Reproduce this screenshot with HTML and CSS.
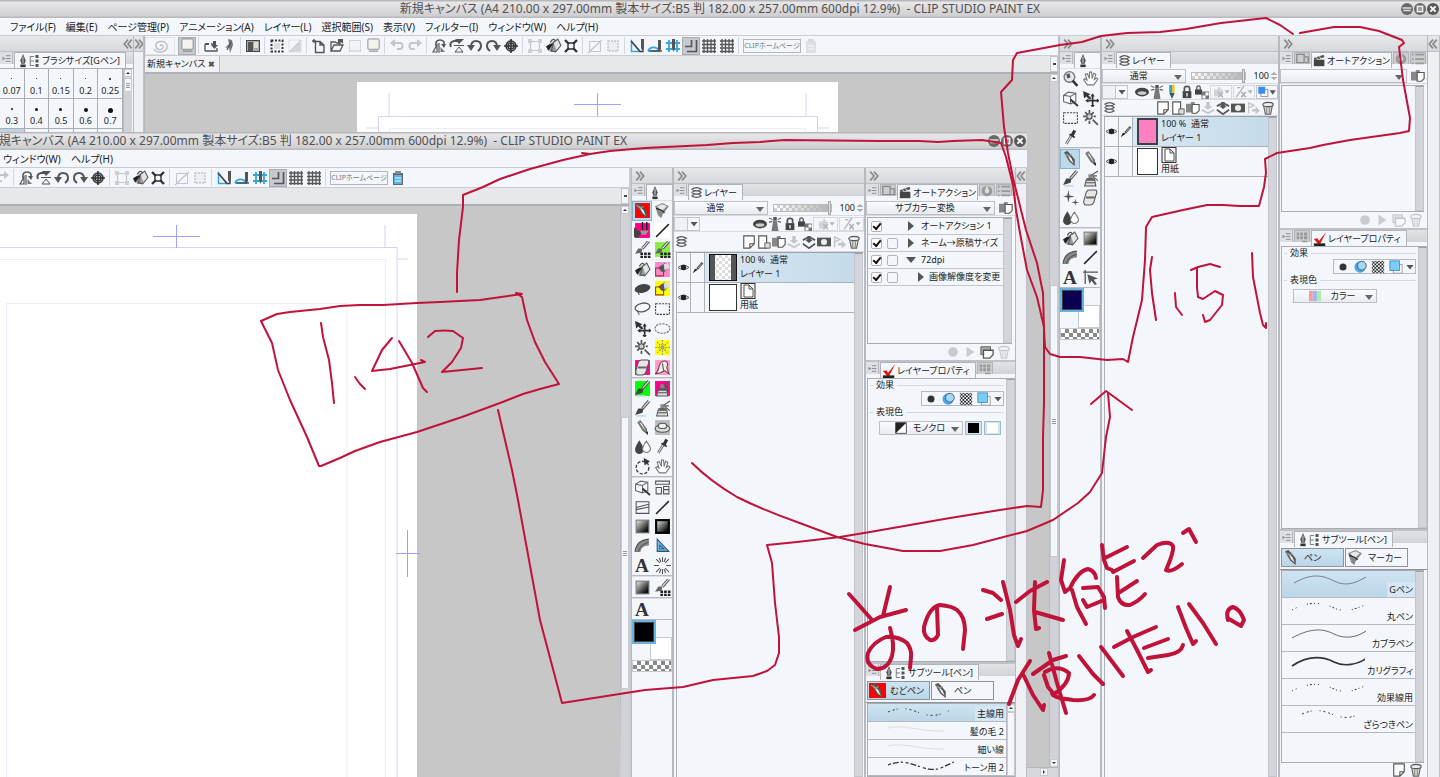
FILE: index.html
```html
<!DOCTYPE html>
<html lang="ja">
<head>
<meta charset="utf-8">
<title>CLIP STUDIO PAINT EX</title>
<link rel="stylesheet" href="styles.css">
</head>
<body>
<main class="desktop">

<section class="win win-back">
  <header class="title">
    <span>新規キャンバス (A4 210.00 x 297.00mm 製本サイズ:B5 判 182.00 x 257.00mm 600dpi 12.9%)&nbsp; - CLIP STUDIO PAINT EX</span>
    <div class="winbtns"><button data-i="wmin" aria-label="最小化"></button><button data-i="wmax" aria-label="最大化"></button><button data-i="wclose" aria-label="閉じる"></button></div>
  </header>
  <nav class="menu">
    <button>ファイル(F)</button><button>編集(E)</button><button>ページ管理(P)</button><button>アニメーション(A)</button><button>レイヤー(L)</button><button>選択範囲(S)</button><button>表示(V)</button><button>フィルター(I)</button><button>ウィンドウ(W)</button><button>ヘルプ(H)</button>
  </nav>
  <div class="body">
    <aside class="dock brush">
      <div class="dockhead end"><i data-i="cl"></i></div>
      <div class="tabs"><span class="tabmenu" data-i="tabmenu"></span><span class="tab on"><i data-i="nib"></i><i data-i="tree"></i>ブラシサイズ[Gペン]</span></div>
      <div class="sizes">
        <div class="sizegrid">
          <button><b class="d1"></b>0.07</button><button><b class="d1"></b>0.1</button><button><b class="d1"></b>0.15</button><button><b class="d1"></b>0.2</button><button><b class="d2"></b>0.25</button>
          <button><b class="d2"></b>0.3</button><button><b class="d3"></b>0.4</button><button><b class="d3"></b>0.5</button><button><b class="d4"></b>0.6</button><button><b class="d5"></b>0.7</button>
          <button class="sel"></button><button></button><button></button><button></button><button></button>
        </div>
        <div class="vscroll small"><span class="arr up"></span><span class="thumb grip"></span></div>
      </div>
    </aside>
    <div class="strip"><div class="dockhead"><i data-i="cr"></i></div></div>
    <div class="work">
      <div class="toolbar" data-toolbar="full"></div>
      <div class="doctabs"><button class="doctab">新規キャンバス <b>✖</b></button><span class="dropend"></span></div>
      <div class="view">
        <svg class="paper paper-back" viewBox="0 0 481 56" preserveAspectRatio="xMidYMin slice" aria-hidden="true">
          <path class="p3" d="M32.500 46.500H449M32.500 46.500V56M449 46.500V56"/>
          <path class="p2" d="M21.500 34.500H460.500M21.500 34.500V56M460.500 34.500V56M32 11V34M449 11V34M9 46H21M461 46H472"/>
          <path class="p1" d="M217 22.500H264M240.500 11V34"/>
        </svg>
        <div class="vscroll"><span class="arr up"></span><span class="thumb grip thumb-back"></span><span class="arr down"></span></div>
      </div>
      <div class="hscroll"><span class="arr right"></span></div>
    </div>
    <aside class="dock tools">
      <div class="dockhead"><i data-i="cr"></i></div>
      <div class="tabs"><span class="tabmenu" data-i="tabmenu"></span><span class="tab on"><i data-i="nib"></i></span></div>
      <div data-tools="zoom hand cube move marquee wand dropper"></div>
      <div data-tools="*pen pencil brush airbrush sparkle eraser drops"></div>
      <div data-tools="bucket grad fan line letter node"></div>
      <div class="colors"><button class="fg navy" aria-label="メインカラー"></button><button class="bg" aria-label="サブカラー"></button></div>
      <div class="checker"></div>
    </aside>
    <aside class="dock layers">
      <div class="dockhead"><i data-i="cr"></i></div>
      <div class="tabs"><span class="tabmenu" data-i="tabmenu"></span><span class="tab on"><i data-i="stack"></i>レイヤー</span></div>
      <div class="lrow"><label class="combo grow"><select aria-label="合成モード"><option>通常</option></select></label><input class="opacity" type="range" value="100" aria-label="不透明度"><span class="num">100</span><i data-i="spin"></i></div>
      <div class="lrow"><button class="swbtn" aria-label="パレットカラー"><span></span><i data-i="tri"></i></button><span class="push"></span><i data-i="mask"></i><i data-i="tower"></i><i data-i="draft"></i><i data-i="lock"></i><i data-i="locka"></i><button class="dim" data-i="stardd" aria-label="マスク"></button><button class="dim" data-i="slashdd" aria-label="定規"></button><button class="lcol" data-i="bluedd" aria-label="レイヤーカラー"></button></div>
      <div class="lrow acts"><i data-i="stack"></i><span class="push"></span><i data-i="page"></i><i data-i="page2"></i><i data-i="folder"></i><i class="faint" data-i="down"></i><i data-i="merge"></i><i data-i="maskb"></i><i class="faint" data-i="send"></i><i data-i="trash"></i></div>
      <div class="listwrap">
        <ul class="layerlist">
          <li class="sel"><span class="eye" data-i="eye"></span><span class="edit" data-i="mini"></span><span class="thumbnail pink"></span><p>100 % &nbsp;通常<br>レイヤー 1</p></li>
          <li><span class="eye" data-i="eye"></span><span class="edit"></span><span class="thumbnail"></span><p><span class="pg" data-i="sheet"></span>用紙</p></li>
        </ul>
        <div class="gutter"></div>
      </div>
    </aside>
    <aside class="dock side">
      <div class="dockhead"><i data-i="cr"></i></div>
      <div class="tabs"><span class="tabmenu" data-i="tabmenu"></span><span class="tab" data-i="screens"></span><span class="tab on cut"><i data-i="clap"></i>オートアクション</span><span class="tab" data-i="info"></span><span class="tab" data-i="lines"></span></div>
      <div class="lrow"><label class="combo grow"><select aria-label="アクションセット"><option></option></select></label><i data-i="folder"></i></div>
      <div class="box actions"><div class="fill"></div><div class="gutter"></div></div>
      <div class="boxfoot faint"><i data-i="rec"></i><i data-i="play"></i><i data-i="copy"></i><i data-i="trash"></i></div>
      <div class="tabs cutline"><span class="tabmenu" data-i="tabmenu"></span><span class="tab" data-i="cells"></span><span class="tab on"><i data-i="check"></i>レイヤープロパティ</span></div>
      <div class="box props">
        <div class="fill">
          <h3>効果</h3>
          <div class="effects"><i data-i="dot"></i><i data-i="blob"></i><i data-i="tone"></i><i data-i="bluesq"></i><i data-i="tri"></i></div>
          <h3>表現色</h3>
          <div class="express"><label class="combo mid"><i data-i="rgb"></i><select aria-label="表現色"><option>カラー</option></select></label></div>
        </div>
        <div class="gutter"></div>
      </div>
      <div class="tabs cutline"><span class="tabmenu" data-i="tabmenu"></span><span class="tab on"><i data-i="nib"></i><i data-i="tree"></i>サブツール[ペン]</span></div>
      <div class="subs"><button class="sel"><i data-i="pen"></i>ペン</button><button><i data-i="marker"></i>マーカー</button></div>
      <div class="box sublist tall">
        <ul class="fill">
          <li class="sel"><i data-s="thin"></i><span>Gペン</span></li>
          <li><i data-s="dots"></i><span>丸ペン</span></li>
          <li><i data-s="mid"></i><span>カブラペン</span></li>
          <li><i data-s="bold"></i><span>カリグラフィ</span></li>
          <li><i data-s="dots"></i><span>効果線用</span></li>
          <li><i data-s="dots2"></i><span>ざらつきペン</span></li>
        </ul>
        <div class="gutter"></div>
      </div>
      <div class="boxfoot"><i data-i="page"></i><i data-i="trash"></i></div>
    </aside>
    <div class="strip"><div class="dockhead"><i data-i="cl"></i></div></div>
  </div>
</section>

<section class="win win-front">
  <header class="title">
    <span>新規キャンバス (A4 210.00 x 297.00mm 製本サイズ:B5 判 182.00 x 257.00mm 600dpi 12.9%)&nbsp; - CLIP STUDIO PAINT EX</span>
    <div class="winbtns"><button data-i="wmin" aria-label="最小化"></button><button data-i="wmax" aria-label="最大化"></button><button data-i="wclose" aria-label="閉じる"></button></div>
  </header>
  <nav class="menu"><button>ウィンドウ(W)</button><button>ヘルプ(H)</button></nav>
  <div class="body">
    <div class="work">
      <div class="toolbar" data-toolbar="tail"></div>
      <div class="doctabs"><span class="dropend"></span></div>
      <div class="view">
        <svg class="paper paper-front" viewBox="0 0 421 571" preserveAspectRatio="xMinYMin slice" aria-hidden="true">
          <rect width="417" height="571" fill="#fff"/>
          <path class="p3" d="M0 45.500H385.500V571M6.500 571V89.500H347V571"/>
          <path class="p2" d="M0 33.500H397M385 11V34M397 45H408"/>
          <path class="p2" d="M397 33V571"/>
          <path class="p1" d="M153 22.500H200M176.500 11V34M396 339.500H420M407.500 316V363"/>
        </svg>
        <div class="vscroll"><span class="arr up"></span><span class="thumb grip thumb-front"></span></div>
      </div>
    </div>
    <aside class="dock tools">
      <div class="dockhead"><i data-i="cr"></i></div>
      <div class="tabs"><span class="tabmenu" data-i="tabmenu"></span><span class="tab on"><i data-i="nib"></i></span></div>
      <div data-tools="*pen@f00 marker stamp@f08 line@fff deco deco@8e4 bucket bucket2@f8c ink bucket2@ff0 lasso marquee move ellipse wand burst@ff0 eraser@f08 smudge@f9c"></div>
      <div data-tools="brush@0f0 airbrush@f08 brush airbrush pencil ufo@bbb drops dropper rotate hand"></div>
      <div data-tools="cube panels split line grad grad2 fan ruler letter rays"></div>
      <div data-tools="grad deco"></div>
      <div data-tools="letter"></div>
      <div class="colors"><button class="fg" aria-label="メインカラー"></button><button class="bg" aria-label="サブカラー"></button></div>
      <div class="checker"></div>
    </aside>
    <aside class="dock layers">
      <div class="dockhead"><i data-i="cr"></i></div>
      <div class="tabs"><span class="tabmenu" data-i="tabmenu"></span><span class="tab on"><i data-i="stack"></i>レイヤー</span></div>
      <div class="lrow"><label class="combo grow"><select aria-label="合成モード"><option>通常</option></select></label><input class="opacity" type="range" value="100" aria-label="不透明度"><span class="num">100</span><i data-i="spin"></i></div>
      <div class="lrow"><button class="swbtn" aria-label="パレットカラー"><span></span><i data-i="tri"></i></button><span class="push"></span><i data-i="mask"></i><i data-i="tower"></i><i data-i="lock"></i><i data-i="locka"></i><button class="dim" data-i="stardd" aria-label="マスク"></button><button class="dim" data-i="slashdd" aria-label="定規"></button></div>
      <div class="lrow acts"><i data-i="stack"></i><span class="push"></span><i data-i="page"></i><i data-i="page2"></i><i data-i="folder"></i><i class="faint" data-i="down"></i><i data-i="merge"></i><i data-i="maskb"></i><i class="faint" data-i="send"></i><i data-i="trash"></i></div>
      <div class="listwrap">
        <ul class="layerlist wide">
          <li class="sel"><span class="eye" data-i="eye"></span><span class="edit" data-i="mini"></span><span class="thumbnail clear"></span><p>100 % &nbsp;通常<br>レイヤー 1</p></li>
          <li><span class="eye" data-i="eye"></span><span class="edit"></span><span class="thumbnail"></span><p><span class="pg" data-i="sheet"></span>用紙</p></li>
        </ul>
        <div class="gutter"></div>
      </div>
    </aside>
    <aside class="dock side">
      <div class="dockhead"><i data-i="cr"></i></div>
      <div class="tabs"><span class="tabmenu" data-i="tabmenu"></span><span class="tab" data-i="screens"></span><span class="tab on cut"><i data-i="clap"></i>オートアクション</span><span class="tab" data-i="info"></span><span class="tab" data-i="lines"></span></div>
      <div class="lrow"><label class="combo grow"><select aria-label="アクションセット"><option>サブカラー変換</option></select></label><i data-i="folder"></i></div>
      <div class="box actions">
        <ul class="fill actlist">
          <li><label><input type="checkbox" checked><input class="ghost" type="checkbox" aria-label="設定"><b class="tr"></b>オートアクション 1</label></li>
          <li><label><input type="checkbox" checked><input type="checkbox" aria-label="設定"><b class="tr"></b>ネーム→原稿サイズ</label></li>
          <li><label><input type="checkbox" checked><input type="checkbox" aria-label="設定"><b class="td"></b>72dpi</label></li>
          <li class="child"><label><input type="checkbox" checked><input type="checkbox" aria-label="設定"><b class="tr"></b>画像解像度を変更</label></li>
        </ul>
        <div class="gutter"></div>
      </div>
      <div class="boxfoot"><i class="faint" data-i="rec"></i><i class="faint" data-i="play"></i><i data-i="copy"></i><i class="faint" data-i="trash"></i></div>
      <div class="tabs cutline"><span class="tabmenu" data-i="tabmenu"></span><span class="tab on"><i data-i="check"></i>レイヤープロパティ</span><span class="tab" data-i="cells"></span></div>
      <div class="box props">
        <div class="fill">
          <h3>効果</h3>
          <div class="effects"><i data-i="dot"></i><i data-i="blob"></i><i data-i="tone"></i><i data-i="bluesq"></i><i data-i="tri"></i></div>
          <h3>表現色</h3>
          <div class="express"><label class="combo mid"><i data-i="bw"></i><select aria-label="表現色"><option>モノクロ</option></select></label><button class="sw black" aria-label="黒"></button><button class="sw" aria-label="白"></button></div>
        </div>
        <div class="gutter"></div>
      </div>
      <div class="tabs cutline"><span class="tabmenu" data-i="tabmenu"></span><span class="tab on"><i data-i="nib"></i><i data-i="tree"></i>サブツール[ペン]</span></div>
      <div class="subs"><button class="sel"><i class="redbg" data-i="pen"></i>むどペン</button><button><i data-i="pen"></i>ペン</button></div>
      <div class="box sublist">
        <ul class="fill">
          <li class="sel"><i data-s="dots2"></i><span>主線用</span></li>
          <li><i data-s="pale"></i><span>髪の毛 2</span></li>
          <li><i data-s="pale"></i><span>細い線</span></li>
          <li><i data-s="dash"></i><span>トーン用 2</span></li>
          <li></li>
        </ul>
        <div class="vscroll small"><span class="arr up"></span><span class="thumb"></span></div>
      </div>
    </aside>
    <div class="strip"><div class="dockhead"><i data-i="cl"></i></div></div>
  </div>
</section>

<svg class="notes" viewBox="0 0 1440 777" preserveAspectRatio="none" role="img" aria-label="手書きメモ">
  <g class="fine">
    <path d="M319 466L307 437L290 400L278 370L272 343L261 321L277 314L290 312L320 309L340 306L360 305L383 305L417 303L440 302L480 300L522 294L516 293L522 297L527 320L535 342L545 362L559 384L540 389L523 394L500 403L462 417L417 432L380 442L355 451L340 458L321 466Z"/>
    <path d="M321 323L323 337L329 360L332 383L334 403M355 377L360 384L365 389M392 338L382 350L372 371L390 369L425 362L421 360M399 341L412 363L423 388L427 392M428 337L435 331Q445 330 453 331L463 338L461 348L452 362L442 372L482 368"/>
    <path d="M457 292L457 273L459 240L463 207V195L473 191L483 187L500 179L530 169L563 160L590 154L582 153L590 154L610 151L645 148L707 145L733 143L760 142L785 140L880 141L919 141L938 142L953 141L982 140L1001 143L1006 157L1013 185L1016 210L1020 233L1027 270L1037 297L1044 327V403L1043 437V490L1041 507L1027 506L1000 510L950 518L870 532L840 537L797 542L767 545L772 563L775 603L779 637V653L775 665L767 671L753 676L713 680L683 687L645 690L562 703L540 620L518 500L512 470L498 410"/>
    <path d="M1293 34L1280 25L1266 18L1221 23L1186 29L1160 32L1127 33L1101 36L1082 42L1060 45L1017 53L1013 60L1012 80L1001 92L1004 127L1008 153L1013 178L1026 230L1037 263L1043 293L1044 330L1045 347L1050 354L1060 357H1080L1107 360L1123 359L1128 362L1133 337L1142 300L1145 260L1146 227L1152 217L1183 210L1207 205H1223L1240 206L1259 206L1264 187L1266 173L1265 159L1277 153L1310 148L1323 145L1350 140L1400 133L1409 131L1410 118L1403 80L1399 47L1404 43L1402 40L1379 31L1360 27H1334L1300 33"/>
    <path d="M692 463Q710 481 737 497Q763 510 797 522L837 537L865 544L903 551H940L973 545L1027 531L1053 520L1078 503L1090 492L1102 473L1106 437L1110 417L1108 393M1091 404L1106 391L1132 410"/>
    <path d="M1152 257L1150 270L1152 293L1156 320M1175 293L1176 307L1182 315M1191 270L1198 267L1210 264L1220 267M1197 268V287L1198 297L1203 299L1215 291L1223 295L1222 305L1210 320L1205 322L1203 315M1252 253L1253 277L1260 313L1263 325L1266 328V323"/>
  </g>
  <g class="thick">
    <path d="M849 594L858 604L872 620M890 587L883 616M855 630L880 617L906 610M890 628Q895 645 892 656Q888 669 877 669Q865 665 868 653Q873 642 886 637Q899 636 907 643Q912 650 911 657L910 668"/>
    <path d="M937 608L938 635Q935 641 930 640Q923 636 924 627Q929 607 940 605Q952 606 957 610Q965 617 965 630L963 649"/>
    <path d="M983 590L993 593L1001 600M987 619L1002 614M1003 582L1010 610L1014 635L1018 646L1021 639M1016 602L1030 591L1047 582M1035 582L1034 610L1036 629L1039 628M1035 612L1063 620"/>
    <path d="M1064 560L1061 580L1065 592L1070 588Q1078 571 1088 569Q1095 571 1096 578M1072 590L1077 607L1086 624M1083 588L1098 587L1104 597L1105 608M1083 600L1087 607L1104 600M1102 545L1104 560L1107 568L1112 570M1127 547L1105 558M1134 561L1113 572M1117 577L1118 597Q1121 606 1130 605Q1139 601 1145 594M1137 581L1120 592"/>
    <path d="M1143 558L1157 545Q1169 540 1173 546Q1174 552 1166 570Q1171 573 1182 564M1183 533L1189 529L1196 542"/>
    <path d="M1030 661L1018 680L1009 704M1023 674L1033 695L1043 710L1044 705M1033 674L1053 660L1066 656M1044 675L1048 687L1053 693M1045 672Q1058 664 1069 673Q1069 684 1053 695M1049 653L1057 683L1066 713M1052 693Q1052 698 1073 700Q1090 701 1094 695"/>
    <path d="M1079 656L1093 674L1103 684M1101 647L1123 676M1114 647L1133 637L1156 627M1127 631L1137 650L1148 672L1151 670M1144 648L1168 639M1148 658L1168 655Q1181 653 1183 645"/>
    <path d="M1178 607L1186 628L1193 644L1196 641M1189 604L1203 623L1216 644M1228 620Q1225 609 1233 607Q1240 609 1244 620L1241 626L1229 619"/>
  </g>
</svg>
</main>
<script src="ui.js"></script>
</body>
</html>
```

FILE: styles.css
```css
* { box-sizing: border-box; }
body {
  margin: 0;
  font: 10px/14px "Noto Sans", "Noto Sans CJK JP", sans-serif;
  font-feature-settings: "palt";
  color: #222;
}
button, select, input { font: inherit; font-feature-settings: inherit; color: inherit; margin: 0; padding: 0; border: 0; background: none; }
ul, p, h3 { margin: 0; padding: 0; list-style: none; font-weight: normal; font-size: inherit; }
svg { display: block; }
[data-i] { display: inline-flex; align-items: center; justify-content: center; flex: none; font-style: normal; }

.desktop { position: relative; min-height: 100vh; overflow: hidden; background: #c7c7c7; }
.win { position: absolute; display: flex; flex-direction: column; overflow: hidden; background: #f3f7fc; }
.win-back { inset: 0; }
.win-front { left: 0; right: 413px; top: 132px; bottom: 0; }
.win > .body { flex: 1; display: grid; min-height: 0; }
.win-back > .body { grid-template-columns: 134px 10px minmax(0, 1fr) 42px 178px 149px 12px; }
.win-front > .body { grid-template-columns: minmax(0, 1fr) 42px 192px 151px 11px; }

.title { flex: none; height: 18px; position: relative; display: flex; justify-content: center; align-items: center; white-space: nowrap; font-size: 12px; color: #505050; background: linear-gradient(#b8b8ba 0 1px, #e8e8ea 2px, #cfcfd2 16px, #b9babd 17px); }
.win-front .title { justify-content: flex-end; padding-right: 400px; }
.winbtns { position: absolute; right: 1px; top: 3px; display: flex; gap: 1px; }
.menu { flex: none; height: 18px; display: flex; gap: 10px; padding-left: 10px; border-bottom: 1px solid #c9ccd2; white-space: nowrap; }
.win-front .menu { padding-left: 3px; }

.work { display: flex; flex-direction: column; min-width: 0; overflow: hidden; border-left: 1px solid #b4b7bd; border-right: 1px solid #c2c5cb; }
.win-front .work { border-left: 0; border-right: 2px solid #c9ccd2; }
.toolbar { flex: none; height: 20px; display: flex; align-items: center; border-bottom: 1px solid #c9ccd2; }
.toolbar button { flex: none; width: 18px; height: 18px; }
.toolbar .spiral { width: 30px; margin-right: 3px; border: 1px solid #dfe2e7; }
.toolbar .on { background: #c6c9cf; border: 1px solid #a9acb3; }
.toolbar .off, .faint { opacity: .3; }
.toolbar hr { flex: none; width: 1px; height: 17px; margin: 0 3px 0 2px; border: 0; background: #d3d7dd; }
.toolbar .clip { width: 58px; height: 14px; margin: 0 1px 0 1px; border: 1px solid #b3b6bc; color: #777; font-size: 7px; line-height: 12px; white-space: nowrap; }
.win-front .toolbar button:first-child { margin-left: -7px; }
.doctabs { flex: none; height: 18px; display: flex; justify-content: space-between; background: #e7e8ea; border-bottom: 2px solid #adb0b5; }
.doctab { padding: 0 4px 0 2px; font-size: 9px; border-right: 1px solid #b9bcc2; background: #f0f2f6; }
.doctab b { color: #555; font-size: 8px; }
.dropend { margin-left: auto; width: 8px; border: 1px solid #c2c5cb; background: #f3f7fc linear-gradient(#444, #444) center / 3px 2px no-repeat; }
.view { flex: 1; min-height: 0; display: flex; justify-content: space-between; background: #c7c7c7; }
.paper { margin-top: 8px; flex: none; align-self: flex-start; }
.paper-back { width: 481px; height: 56px; margin-left: 212px; background: #fff; }
.paper-front { width: 421px; height: 571px; }
.p1, .p2, .p3 { fill: none; stroke: #a0a0fa; }
.p2 { stroke: #d2d2fb; }
.p3 { stroke: #ececfd; }
.vscroll { flex: none; width: 9px; display: flex; flex-direction: column; background: #d1d2d7; border-left: 1px solid #b9bbc0; }
.arr { flex: none; width: 8px; height: 8px; background: #f3f7fc; display: flex; align-items: center; justify-content: center; border: 1px solid #c6c9cf; }
.arr::after { content: ""; border: 2px solid transparent; }
.up::after { border-bottom-color: #333; margin-top: -2px; }
.down::after { border-top-color: #333; margin-bottom: -2px; }
.right::after { border-left-color: #333; margin-right: -2px; }
.thumb { display: flex; align-items: center; justify-content: center; background: #f3f7fc; border: 1px solid #c6c9cf; }
.grip::after { content: ""; width: 4px; height: 5px; background: repeating-linear-gradient(#999 0 1px, transparent 1px 2px); }
.thumb-back { margin-top: 203px; height: 272px; }
.win-back .view .down { margin-top: auto; }
.thumb-front { margin-top: 203px; height: 272px; }
.hscroll { flex: none; height: 10px; display: flex; justify-content: flex-end; padding-right: 10px; background: #d6d8dc; border-top: 1px solid #b5b7bb; }
.win-front .view .vscroll { border-bottom: 87px solid #d1d2d7; }

.dock { display: flex; flex-direction: column; min-width: 0; min-height: 0; background: #f3f7fc; border-left: 1px solid #b6b9bf; border-right: 1px solid #b6b9bf; }
.dock.brush { border-left: 0; }
.dockhead { flex: none; height: 16px; display: flex; align-items: center; padding-left: 3px; background: linear-gradient(#e6e7e9, #d8d9dc); border-bottom: 1px solid #bcbfc5; }
.dockhead.end { justify-content: flex-end; }
.strip { background: #eff0f3; border-right: 1px solid #bdc0c6; overflow: hidden; }
.strip .dockhead { padding-left: 0; }
.tabs { flex: none; height: 16px; display: flex; overflow: hidden; font-size: 9px; background: linear-gradient(#e2e3e6, #d3d4d8 11px, #aeb1b7 11px, #f3f7fc 12px); }
.tabmenu { width: 13px; height: 12px; border-right: 1px solid #b6b9bf; background: #dedfe3; }
.tab { min-width: 16px; height: 12px; margin-left: 1px; border: 1px solid #b0b3b9; border-bottom: 0; background: #cccdd1; }
.tab.on { height: 16px; display: flex; align-items: center; padding-right: 5px; background: #f3f7fc; white-space: nowrap; }
.tab.on [data-i] { margin: 0 1px; }
.tab.on [data-i="tree"] { margin: 0 2px 0 -3px; }
.tab.cut { padding-right: 1px; }
.tools .tab.on { flex: 1; border-right: 0; }
.cutline { height: 18px; border-top: 2px solid #bfc1c7; }

.sizes { display: flex; border-top: 1px solid #a9acb2; }
.sizegrid { flex: 1; display: grid; grid-template-columns: repeat(5, 1fr); grid-auto-rows: 30px; }
.sizegrid button { display: flex; flex-direction: column; align-items: center; justify-content: space-between; padding: 9px 0 0; border-right: 1px solid #a9acb2; border-bottom: 1px solid #a9acb2; font-size: 9px; line-height: 15px; }
.sizegrid .sel { background: #bcd3e2; }
.sizegrid b { border-radius: 50%; background: #111; width: 1px; height: 1px; }
.sizegrid .d2 { width: 2px; height: 2px; }
.sizegrid .d3 { width: 3px; height: 3px; }
.sizegrid .d4 { width: 4px; height: 4px; }
.sizegrid .d5 { width: 5px; height: 5px; }
.brush .vscroll { margin-right: 1px; }
.brush .thumb { height: 14px; margin-top: 1px; }

.toolset { flex: none; display: grid; grid-template-columns: 1fr 1fr; grid-auto-rows: 1fr; border-bottom: 1px solid #b6b9bf; border-top: 1px solid #dcdfe4; }
.rows-1 { height: 22px; }
.rows-3 { height: 60px; }
.rows-4 { height: 80px; }
.rows-5 { height: 99px; }
.rows-9 { height: 178px; }
.toolset button { display: flex; align-items: center; justify-content: center; }
.toolset .sel { background: #bcd9ec; outline: 1px solid #8eb2c8; outline-offset: -1px; }
.colors { flex: none; display: grid; grid-template-columns: 17px 5px 17px; grid-template-rows: 16px 6px 17px; padding: 1px 0 0 1px; }
.fg { grid-area: 1 / 1 / 3 / 3; z-index: 1; background: #000; border: 2px solid #444; outline: 2px solid #68b3dd; outline-offset: -1px; }
.fg.navy { background: #0a0052; }
.bg { grid-area: 2 / 2 / 4 / 4; background: #fff; border: 1px solid #c6c9cf; }
.checker { height: 12px; background: repeating-conic-gradient(#888 0 25%, #fff 0 50%) 0 0 / 8px 8px; border: 1px solid #c6c9cf; }

.lrow { flex: none; height: 16px; display: flex; align-items: center; gap: 1px; border-bottom: 1px solid #d8dbe0; }
.lrow.acts { padding: 0 3px 0 1px; }
.win-front .acts { height: 20px; }
.push { flex: 1; }
.combo { height: 14px; display: flex; align-items: center; border: 1px solid #bcbfc5; background: linear-gradient(#fafcff, #e8ebf0); }
.combo::after { content: ""; flex: none; margin: 3px 3px 0 0; border: 4px solid transparent; border-top: 5px solid #666; border-bottom: 0; }
.combo select { flex: 1; min-width: 0; height: 12px; line-height: 12px; appearance: none; text-align: center; text-align-last: center; font-size: 9px; }
.grow { flex: 1; }
.opacity { appearance: none; width: 31%; height: 8px; margin-left: 4px; background: linear-gradient(90deg, transparent, #b4b5b8), repeating-conic-gradient(#d0d0d2 0 25%, #fff 0 50%) 0 0 / 6px 6px; border: 1px solid #bbb; }
.opacity::-webkit-slider-thumb { appearance: none; width: 3px; height: 14px; background: #ddd; border: 1px solid #aaa; }
.num { width: 22px; text-align: right; font-size: 9px; }
.side .lrow > i { width: 19px; }
.swbtn { height: 14px; display: flex; align-items: center; gap: 2px; padding-right: 1px; border: 1px solid #c2c5cb; }
.swbtn span { width: 13px; height: 12px; border-right: 1px solid #c2c5cb; background: #eef2f7; }
.dim, .lcol { width: 22px; height: 14px; border: 1px solid #c2c5cb; }
.dim { opacity: .6; }
.win-front .dim { width: 25px; }
.listwrap { flex: 1; display: flex; min-height: 0; margin: 0 1px 0 2px; border-top: 1px solid #9ea1a8; border-left: 1px solid #aeb1b7; }
.layerlist { flex: 1; min-width: 0; }
.layerlist li { height: 30px; display: flex; border-bottom: 1px solid #aeb1b7; }
.layerlist .sel { background: linear-gradient(90deg, #d8e7f2, #c5dbe9) right / calc(100% - 28px) 100% no-repeat; }
.eye, .edit { width: 14px; border-right: 1px solid #aeb1b7; }
.thumbnail { flex: none; width: 21px; height: 27px; margin: 1px 3px 0 4px; border: 1px solid #333; background: #fff; }
.wide .thumbnail { width: 28px; }
.pink { border: 2px solid #3c4248; background: #ff80c0; }
.clear { border: 1px solid #111; background: linear-gradient(90deg, #555 5px, transparent 5px 21px, #555 21px), repeating-conic-gradient(#ddd 0 25%, #fff 0 50%) 0 0 / 6px 6px; }
.layerlist p { white-space: nowrap; font-size: 9px; line-height: 14px; }
.pg { width: 16px; height: 15px; }
.layerlist .pg { display: flex; }
.gutter { flex: none; width: 9px; background: #d4d5da; border: 1px solid #c2c5cb; border-top-color: #9ea1a8; }

.side { font-size: 9px; }
.box { flex: none; display: flex; min-height: 0; margin: 0 3px 0 1px; border: 1px solid #a9acb2; border-right: 0; }
.fill { flex: 1; min-width: 0; overflow: hidden; }
.actions { height: 127px; margin-top: 1px; }
.boxfoot { flex: none; height: 16px; display: flex; align-items: center; justify-content: flex-end; gap: 3px; padding-right: 4px; }
.actlist li { height: 17px; border-bottom: 1px solid #c2c5cb; overflow: hidden; }
.actlist label { display: flex; align-items: center; gap: 5px; height: 16px; padding-left: 3px; white-space: nowrap; }
.actlist input { appearance: none; flex: none; width: 11px; height: 11px; border: 1px solid #b0b3b9; border-radius: 2px; }
.actlist input:checked { background: #fff; }
.actlist input:checked::after { content: ""; display: block; width: 6px; height: 3px; margin: 1px 0 0 1px; border: solid #111; border-width: 0 0 2px 2px; transform: rotate(-50deg); }
.actlist .ghost { visibility: hidden; }
.tr, .td { flex: none; margin: 0 2px 0 5px; border: 5px solid transparent; border-left: 6px solid #555; border-right: 0; }
.td { border: 5px solid transparent; border-top: 6px solid #555; border-bottom: 0; margin: 0 0 0 3px; }
.child .tr { margin: 0 0 0 15px; }
.props { flex: 1; margin-right: 0; }
.props .fill { padding: 0 2px; }
.props h3 { display: flex; align-items: center; gap: 3px; height: 12px; line-height: 12px; }
.props h3::before { content: ""; width: 3px; height: 1px; background: #d5d8de; }
.props h3::after { content: ""; flex: 1; height: 1px; background: #d5d8de; }
.effects { width: 83px; height: 15px; margin-left: auto; display: flex; align-items: center; justify-content: space-around; border: 1px solid #b6b9bf; }
.effects [data-i] { width: 16px; }
.effects [data-i="tri"] { width: 8px; }
.express { display: flex; gap: 2px; padding: 3px 0 0 9px; }
.mid { width: 84px; padding-left: 15px; }
.sw { width: 17px; height: 14px; border: 1px solid #9fb9c9; background: #fff; box-shadow: inset 2px 1px #cfe3f0, inset -2px -1px #cfe3f0; }
.sw.black { background: #000; }
.subs { flex: none; display: flex; gap: 1px; padding: 1px 0 2px 1px; border-bottom: 1px solid #8f9298; }
.subs button { width: 63px; height: 19px; display: flex; align-items: center; gap: 4px; padding-left: 1px; border: 1px solid #8f9298; white-space: nowrap; }
.subs .sel, .sublist .sel { background: linear-gradient(#cfe4f2, #bad6e8); }
.redbg { background: #f00; height: 15px; }
.sublist li { height: 18px; display: flex; justify-content: space-between; border-bottom: 1px solid #b6b9bf; overflow: hidden; white-space: nowrap; }
.sublist li i { flex: 0 1 90px; min-width: 0; overflow: hidden; }
.sublist li span { flex: none; align-self: flex-end; padding: 0 2px; line-height: 15px; }
.sublist .sel span { background: #d6e7f3; }
.tall { height: 193px; }
.tall li { height: 27px; }
.tall ~ .boxfoot { height: 14px; }
.win-front .sublist { height: 74px; margin-right: 0; overflow: hidden; }
.sublist .thumb { flex: 1; }

.notes { position: absolute; inset: 0; width: 100%; height: 100%; pointer-events: none; fill: none; stroke: #c01339; stroke-linecap: round; stroke-linejoin: round; }
.fine { stroke-width: 2; }
.thick { stroke-width: 4; }
```

FILE: ui.js
```js
const g = '#555';
const S = (d, w = 1.2, c = g) => `<path d="${d}" fill="none" stroke="${c}" stroke-width="${w}"/>`;
const F = (d, c = g) => `<path d="${d}" fill="${c}"/>`;

const ICONS = {
  cr: [10, S('M2 1L8 8L2 15M8 1L14 8L8 15', 2.6, '#888')],
  cl: [10, S('M8 1L2 8L8 15M14 1L8 8L14 15', 2.6, '#888')],
  wmin: [12, '<circle cx="8" cy="8" r="8" fill="#686868"/><path d="M2 6.500H14M3 10H13" stroke="#ddd" stroke-width="2"/>'],
  wmax: [12, '<circle cx="8" cy="8" r="8" fill="#686868"/><rect x="4.500" y="4.500" width="7" height="7" fill="#999" stroke="#eee" stroke-width="2"/>'],
  wclose: [12, '<circle cx="8" cy="8" r="8" fill="#585858"/><path d="M4.500 4.500l7 7M11.500 4.500l-7 7" stroke="#fff" stroke-width="2.500"/>'],
  tabmenu: [9, S('M7 3H15M7 8H15M7 13H15', 1.6, '#888') + F('M6 8L1 5V11Z', '#888')],
  nib: [14, F('M8 0L5 7L6 11H10L11 7Z', '#555') + F('M5 12H11V15H5Z', '#333') + S('M8 3V10', 1, '#ddd')],
  tree: [12, S('M8 2H3V14H8M3 8H8', 1) + F('M10 0h4v4h-4zM10 6h4v4h-4zM10 12h4v4h-4z')],
  stack: [13, S('M2 4Q8 0 14 4Q8 8 2 4M2 8Q8 12 14 8M2 12Q8 16 14 12M2 8L5 6.500M14 8L11 6.500M2 12L5 10.500M14 12L11 10.500', 1.6)],
  tri: [8, F('M1 4H15L8 13Z', '#555')],
  spin: [8, F('M1 6L8 0L15 6ZM1 10L8 16L15 10Z', '#aaa')],
  spiral: [16, S('M8 8q2-2 3 0t-2 3.500q-4 1-5-3t4-5q6-1 7 4t-5 6.500q-6 1-8-3', 1.3, '#bbb')],
  app: [15, '<rect x="2" y="1" width="12" height="11" rx="1" fill="#f4f4ee" stroke="#888"/><path d="M3 14H13" stroke="#777"/>'],
  open: [16, S('M2 13V6M2 13H14V10M10 6h-2', 1.3) + F('M10 3h3v4h2l-3.500 4L8 7h2z') + F('M2 5h4v2H2z')],
  quick: [16, F('M7 1L11 2L12 7L9 15L8 9L4 10L8 6Z', '#777') + S('M10 4L6 12', 1.2)],
  book: [16, '<rect x="1.500" y="2.500" width="13" height="11" fill="#aaa" stroke="#444"/>' + F('M3 4h5v9H3z', '#555') + F('M9 4h4v6H9z', '#ddd')],
  sel: [16, '<rect x="2.500" y="2.500" width="11" height="11" fill="none" stroke="#333" stroke-width="2" stroke-dasharray="2 1.500"/><rect x="5" y="5" width="6" height="6" fill="#ddd"/>'],
  half: [16, F('M2 14L14 2V14Z', '#888') + S('M2 2H14V14H2Z', 1, '#aaa') + S('M2 14L14 2', 1)],
  new: [16, S('M4.500 3.500H9L13 7V14.500H4.500ZM9 3.500V7H13', 1.4) + S('M1 3H5M3 1V5', 1.3)],
  dir: [16, S('M2 13V4H6L8 5H11V7M2 13H11L14 7H5Z', 1.3) + F('M9 1H14V6L12 4L9 6Z', '#555')],
  save: [16, '<rect x="2.500" y="2.500" width="11" height="11" fill="#eee" stroke="#888"/><path d="M3 13H13" stroke="#aaa" stroke-width="2"/>'],
  undo: [16, S('M4 5H11Q13.500 5 13.500 8T11 11H8', 2) + F('M6 1V9L1 5Z')],
  redo: [16, S('M12 5H5Q2.500 5 2.500 8T5 11H8', 2) + F('M10 1V9L15 5Z')],
  fliph: [16, S('M5 8Q4 2 9 2T13 7', 1.6) + F('M10 6H15L13 10Z') + S('M8 5V15M2 14L6 7V14Z', 1.2) + F('M9.500 14V9L14 14Z', '#777')],
  flipv: [16, S('M2 9Q0 4 5 3L9 3', 2) + F('M6 1H15L10 6Z', '#555') + S('M5 7.500H15', 1) + S('M6 14H14L10 9Z', 1)],
  rotl: [16, S('M4 9Q4 3 9 3T14 8Q14 11 11 13', 2) + F('M0 7H8L4 13Z')],
  rotr: [16, S('M12 9Q12 3 7 3T2 8Q2 11 5 13', 2) + F('M8 7H16L12 13Z')],
  reset: [16, '<circle cx="8" cy="8" r="5" fill="none" stroke="#333" stroke-width="1.500"/>' + S('M1 8H15M8 1V15M5 8a3 3 0 0 0 6 0a3 3 0 0 0-6 0', 1.6, '#333')],
  frame: [16, S('M3.500 3.500H12.500V12.500H3.500Z', 1.2) + F('M1 1h4v4H1zM11 1h4v4h-4zM1 11h4v4H1zM11 11h4v4h-4z', '#777')],
  bucket: [17, F('M1 9L8 4L14 8L10 14L5 14Z', '#999') + F('M8 5L12 2L15 8L11 13Z', '#e4e4e4') + S('M8 5L12 2L15 8L10 14L6 13Z', 1) + F('M1 9Q4 6 8 6L3 13Z', '#222') + S('M5 5Q8 0 10 4', 1.2)],
  fit: [16, S('M2 2L6 6M14 2L10 6M2 14L6 10M14 14L10 10', 2.4, '#333') + S('M5 5H11V11H5Z', 1.4, '#333')],
  nosel: [16, S('M2.500 3.500H13.500V13.500H2.500Z', 1) + S('M1 15L15 2', 1.3)],
  sela: [16, '<rect x="3" y="3" width="10" height="10" fill="#ddd" stroke="#555" stroke-width="1.500" stroke-dasharray="2 1"/>'],
  snapa: [16, S('M2.500 3V13.500H11Z', 1.5, '#38a4dc') + S('M2 3L11 13.500H14V2', 1.4, '#444') + F('M12 1h3v9l-1.500 3L12 10z', '#555')],
  snapb: [16, S('M1 13H12A6 6 0 0 0 1 13', 1.8, '#38a4dc') + S('M3 13H15M12 13V6', 1.5) + F('M11 2h3v9l-1.500 3L11 11z', '#555')],
  snapc: [16, S('M1 5H15M1 11H15M4 2V14M12 2V14', 1.8, '#38a4dc') + F('M7 1h3v9l-1.500 4L7 10z', '#555')],
  snapd: [16, S('M2 8.500H8.500V2M4 13.500H13.500V2', 1.7)],
  grid: [16, S('M1 3H15M1 6.500H15M1 10H15M1 13.500H15M3 1V15M6.500 1V15M10 1V15M13.500 1V15', 1.3)],
  clipb: [16, '<rect x="3" y="3" width="10" height="12" fill="#666"/><rect x="5" y="1" width="6" height="3" fill="#888"/><rect x="4" y="5" width="8" height="9" fill="#56b4ea"/><path d="M5 8H11M5 11H11" stroke="#fff"/>'],
  clipg: [16, '<rect x="3" y="3" width="10" height="12" fill="#aaa"/><rect x="5" y="1" width="6" height="3" fill="#999"/><path d="M5 8H11M5 11H11" stroke="#fff"/>'],
  zoom: [17, '<circle cx="7" cy="6.500" r="5" fill="#e4e8ec" stroke="#777" stroke-width="1.300"/>' + F('M4 4L7 3L8 7L5 8Z', '#555') + S('M10 10L14.500 15', 2.4, '#333')],
  hand: [17, '<path d="M5 14L1.500 9L3 8L5 10L3 4L5 3.500L7 8L7 2H9L9.500 8L11 3L13 4L11.500 9L13.500 7.500L15 8.500L11 14Z" fill="#fff" stroke="#777"/>'],
  cube: [17, S('M1.500 5L6 2L13 3V11L8 13L1.500 11ZM1.500 5L8 6V13M8 6L13 3', 1, '#666') + S('M8 9L15 15', 1.8, '#333')],
  move: [17, F('M1 1L8 4L6 5L9 8L7 9L4 6L2 8Z', '#333') + S('M10 5V15M5 10H15', 1.6, '#333') + F('M10 3l2 3H8zM10 17l2-3H8zM17 10l-3-2v4zM3 10l3-2v4z', '#333')],
  marquee: [17, '<rect x="1.500" y="3.500" width="13" height="10" fill="none" stroke="#444" stroke-dasharray="2 1"/>'],
  ellipse: [17, '<ellipse cx="8" cy="8" rx="7" ry="4.500" fill="none" stroke="#666" stroke-dasharray="2 1"/>'],
  lasso: [17, '<ellipse cx="8" cy="7" rx="7" ry="4" fill="none" stroke="#555" stroke-width="1.200" transform="rotate(-12 8 7)"/><path d="M3 10L5 14" stroke="#555"/>'],
  ink: [17, '<ellipse cx="8" cy="8" rx="7.500" ry="4" fill="#444" transform="rotate(-12 8 8)"/><path d="M3 10L5 14" stroke="#444"/>'],
  wand: [17, S('M7 1V4M7 11V14M1 7H4M11 7H13M3 3L5 5M11 3L9 5M3 11L5 9M10 10L15 15', 1.6) + '<circle cx="7" cy="7" r="2.500" fill="#ccc" stroke="#444"/>'],
  dropper: [17, S('M4 14L9 6', 2.6, '#555') + S('M4 14L9 6', 1, '#ddd') + S('M7 5L12 8', 1.6, '#333') + S('M9.500 6L12 1.500', 3, '#333')],
  pen: [17, F('M2 2L5 1L8 4L12 9L12 15L7 11L4 6Z', '#555') + F('M4 3L9 8L11 13L8 10Z', '#eee') + S('M2 3L6 6L9 4', 1, '#999')],
  pencil: [17, F('M3 3L6 1L12 9L13 15L8 11Z', '#777') + F('M5 3L9 9L11 11L7 4Z', '#f4f4f4') + F('M11 12L13 12V15Z', '#111')],
  marker: [17, F('M1 4L8 1L14 4L8 12L7 15L4 13Z', '#888') + F('M3 4L8 2L12 4L7 9Z', '#e8e8e8') + S('M2 6Q7 7 10 10', 1.2, '#222')],
  stamp: [17, F('M0 5L7 10L4 15L0 14Z', '#444') + S('M8 0V8M12 0V8', 1.4, '#222') + F('M6 8H14L11 12H7Z', '#999')],
  brush: [17, S('M14 1L8 8', 3, '#555') + S('M14 1L8 8', 1, '#eee') + F('M4 8L9 8L8 12L1 14Z', '#444') + S('M2 15H11', 1.5, '#bcd9ee')],
  airbrush: [17, '<path d="M4 9.500L2.500 15H13L12 9.500Z" fill="#ddd" stroke="#555"/>' + F('M6 4h4v5H6z', '#888') + S('M4 8.500H12', 1.5) + S('M4 12H12', 1) + S('M9 5L15 1M10 5.500H14M10 6L15 10', 1)],
  deco: [17, S('M14 0L8 7', 2.8, '#555') + S('M14 0L8 7', 1, '#eee') + F('M4 7L8 7L7 11L1 12Z', '#666') + '<path d="M6 12H16M6 15H16" stroke="#222" stroke-width="2.200" stroke-dasharray="2.500 1"/>'],
  bucket2: [17, S('M1.500 6.500H9V14H1.500Z', 1, '#a33') + F('M4 6L10 2L14 6L10 10H7Z', '#555') + F('M9 3L13 2L15 6L10 9Z', '#ddd')],
  burst: [17, '<path d="M8 1V15M1 8H15M3 3L13 13M13 3L3 13" stroke="#997" stroke-dasharray="1.500 1"/><circle cx="8" cy="8" r="3" fill="none" stroke="#a96" stroke-dasharray="1 1"/>'],
  eraser: [17, '<path d="M4 3Q5 1 7 1H13Q15 2 13 6L11 13Q10 15 8 15H3Q1 14 2 10Z" fill="#e6e6e6" stroke="#555"/>' + F('M4 7H12.500L11.500 9H3.500Z', '#666')],
  smudge: [17, '<path d="M1 14Q4 12 5 6Q7 1 11 2Q14 4 12 8L14 14L10 11L6 13Z" fill="#eee" stroke="#744"/><path d="M8 4L9 11" stroke="#744"/>'],
  ufo: [17, '<ellipse cx="8" cy="9" rx="7" ry="3.500" fill="#ddd" stroke="#555"/><ellipse cx="8" cy="6.500" rx="4" ry="2.500" fill="#eee" stroke="#555"/>'],
  sparkle: [17, F('M6 1L7 6L12 7L7 8L6 13L5 8L1 7L5 6ZM12.500 9L13 11.700L16 12.500L13 13.300L12.500 16L12 13.300L9 12.500L12 11.700Z')],
  drops: [17, F('M5 2Q9 8 9 11A4 4 0 0 1 1 11Q1 8 5 2Z', '#444') + '<path d="M11.500 3Q15.500 8 15.500 11A4 4 0 0 1 8 11Q8 8 11.500 3Z" fill="#fff" stroke="#777"/>'],
  rotate: [17, '<circle cx="8" cy="9" r="6" fill="none" stroke="#444" stroke-width="1.300" stroke-dasharray="3 1.500"/>' + F('M9 0L15 3L10 7Z', '#333')],
  panels: [17, S('M1.500 2H14.500V5H1.500ZM2 8H7V14H2ZM9 7H14V14H9ZM9 10H14', 1)],
  split: [17, S('M2 2.500H14V13.500H2ZM2 8L14 5M2 10L14 7.500', 1)],
  line: [17, S('M2 14L14 2', 1.4, '#222')],
  grad: [17, '<rect x="2" y="2" width="12" height="12" fill="url(#gr)" stroke="#777"/>'],
  grad2: [17, '<rect x="2" y="2" width="12" height="12" fill="url(#gr)" stroke="#000" stroke-width="2"/>'],
  fan: [17, F('M1 14Q1 3 14 2V8Q7 8 6 14Z', '#888') + S('M1 14Q2 3 14 2M4 14Q6 7 14 5', 1)],
  ruler: [17, '<path d="M3 2V13.500H14ZM5.500 8V11H9Z" fill="#69b9e6" stroke="#357" fill-rule="evenodd"/>'],
  letter: [18, '<text x="8" y="14" text-anchor="middle" font-family="Liberation Serif" font-weight="bold" font-size="17" fill="#333">A</text>'],
  rays: [17, '<path d="M8 0V16M0 8H16M2 2L14 14M14 2L2 14M5 1L11 15M11 1L5 15" stroke="#555"/><circle cx="8" cy="8" r="3.500" fill="#f3f7fc"/>'],
  node: [17, S('M3 1V14M1 3H15', 1.2) + F('M5 5L15 9L11 10L14 14L12 15L9 11L7 14Z', '#555')],
  mask: [14, '<ellipse cx="8" cy="8" rx="8" ry="5" fill="#444"/><ellipse cx="8" cy="9" rx="5" ry="2" fill="#ccc"/>'],
  tower: [14, F('M6 4H10L12 16H4Z', '#777') + F('M6 0h4v4H6z') + S('M1 1L5 3M15 1L11 3M1 6L5 5M15 6L11 5', 1.2)],
  draft: [14, F('M5 0H11V9H5Z', '#f2c814') + F('M5 0H8V9H5Z', '#2b9fd8') + F('M5 9H11L8 16Z', '#357')],
  lock: [14, S('M5 7V4Q5 1.500 8 1.500T11 4V7', 2) + F('M3 7H13V15H3Z', '#444') + F('M7 9h2v4H7z', '#ccc')],
  locka: [14, S('M2 5V3Q2 1 4 1T6 3V5', 1.5) + F('M0 5H8V11H0Z', '#444') + '<path d="M8 8h8v8H8z" fill="#fff" stroke="#666"/><path d="M8 8h4v4H8zM12 12h4v4h-4z" fill="#777"/>'],
  stardd: [14, F('M2 5H6L8 1L10 5H12V13H2Z', '#bbb') + S('M7 8L12 14M12 8L7 14', 1.5, '#888') + F('M14 6h6l-3 4z', '#888'), 20],
  slashdd: [14, S('M1 14L10 1M2 3h4', 1.5, '#888') + S('M7 8L12 14M12 8L7 14', 1.5, '#777') + F('M14 6h6l-3 4z', '#888'), 20],
  bluedd: [14, '<rect x="3" y="5" width="8" height="8" fill="#fff" stroke="#888"/><rect x="0" y="2" width="8" height="8" fill="#3c8cf0"/>' + F('M13 6h7l-3.500 5z', '#555'), 20],
  page: [14, '<path d="M2 1H14V10L9 15H2ZM9 15V10H14" fill="#fff" stroke="#555" stroke-width="1.300"/>'],
  page2: [14, '<path d="M2 1H11V15H2Z" fill="#fff" stroke="#555" stroke-width="1.300"/><path d="M9 9H15V15H9Z" fill="#ddd" stroke="#555"/>'],
  folder: [14, F('M0 3H5L6 1H10V13H0Z', '#888') + '<path d="M7 4H15V11L12 14H7Z" fill="#fff" stroke="#555" stroke-width="1.300"/>'],
  down: [14, F('M6 1h4v5h3L8 10 3 6h3z') + S('M1 10L8 14L15 10', 2)],
  merge: [14, F('M6 1h4v4h3L8 9 3 5h3z') + S('M1 6Q8 0 15 6M1 10L8 15L15 10', 2)],
  maskb: [14, '<rect y="3" width="16" height="10" fill="#555"/><circle cx="8" cy="8" r="3.500" fill="#eee"/>'],
  send: [14, S('M3 1V14M3 2L9 5L3 8', 1.6) + F('M7 9h4V6l5 5-5 4v-3H7z')],
  trash: [14, '<path d="M3 5L5 15H11L13 5Z" fill="#ddd" stroke="#666" stroke-width="1.300"/><ellipse cx="8" cy="4" rx="6" ry="2.500" fill="#eee" stroke="#555" stroke-width="1.300"/><path d="M6.500 7V14M9.500 7V14" stroke="#777"/>'],
  eye: [11, S('M0 8Q8 1 16 8Q8 14 0 8Z', 1.4, '#555') + '<circle cx="8" cy="8" r="4" fill="#222"/>'],
  mini: [12, S('M14 1L7 9', 3, '#444') + S('M13 2L8 8', 1, '#ddd') + F('M4 9L8 10L1 15Z', '#222')],
  sheet: [16, '<rect x="1" y="0.500" width="14" height="15" fill="#eee" stroke="#333"/><path d="M4 2H9L13 6V14H4ZM9 2V6H13" fill="#fff" stroke="#555"/>'],
  screens: [13, S('M1 3H10V13H1ZM11 6H15V13H11', 1.6, '#888')],
  clap: [13, F('M1 7H14V15H1Z', '#444') + F('M1 5L13 1L14 4L2 8Z', '#555') + S('M4 4L6 7M8 3L10 6', 1.2, '#eee')],
  info: [12, '<circle cx="8" cy="8" r="7" fill="#999"/><circle cx="8" cy="8" r="3" fill="#ddd"/><path d="M8 2V8" stroke="#ddd" stroke-width="3"/>'],
  lines: [14, S('M1 3H3M5 3H15M1 8H3M5 8H15M1 13H3M5 13H15', 2, '#999')],
  cells: [12, S('M1 4H15M1 9H15', 4, '#999') + S('M5 1V12M10 1V12', 1, '#ddd') + S('M8 14H15', 2, '#999')],
  check: [14, F('M1 8L5 7L7 10L15 0L8 14H6Z', '#e01818') + F('M1 13H14V16H1Z', '#222')],
  rec: [14, '<circle cx="8" cy="8" r="5.500" fill="#666"/>'],
  play: [14, F('M4 2L13 8L4 14Z', '#666')],
  copy: [14, '<path d="M1 2H12V11H1Z" fill="#aaa" stroke="#555"/><path d="M4 6H15V11L11 15H4Z" fill="#fff" stroke="#555" stroke-width="1.500"/>'],
  dot: [14, '<circle cx="8" cy="8" r="4" fill="#333"/>'],
  blob: [14, '<circle cx="7" cy="8" r="6.500" fill="#4aa8e8"/><circle cx="9" cy="6.500" r="5" fill="#a5d8f7" stroke="#456"/>'],
  tone: [14, '<rect x="1" y="1" width="14" height="14" fill="url(#ch)"/>'],
  bluesq: [14, '<rect x="5" y="5" width="10" height="10" fill="#fff" stroke="#999"/><rect x="1" y="1" width="11" height="11" fill="#78cdfb" stroke="#4a90b8"/>'],
  rgb: [12, F('M0 1h5v14H0z', '#f99') + F('M5 1h6v14H5z', '#9be') + F('M11 1h5v14h-5z', '#aea')],
  bw: [12, '<rect x="1" y="1" width="14" height="14" fill="#fff" stroke="#222"/>' + F('M1 1H15L1 15Z', '#222')]
};

const STROKES = {
  thin: '<path d="M12 12C30 2 40 4 52 10S74 12 84 6" stroke-width=".8" stroke="#667"/>',
  mid: '<path d="M10 13C30 2 42 4 52 9S74 13 84 6" stroke="#667"/>',
  bold: '<path d="M10 14C28 2 42 5 52 10S76 13 86 5" stroke-width="1.700"/>',
  dots: '<path d="M10 12C28 2 42 5 52 10S76 11 86 5" stroke-dasharray="1 3 1 11 1 2 2 2"/>',
  dots2: '<path d="M20 8C34 2 42 5 52 9S72 12 82 6" stroke-dasharray="2 3 2 2 1 8 1 3"/>',
  dash: '<path d="M20 7C36 1 42 6 56 10S74 9 86 4" stroke-width="1.300" stroke-dasharray="3 2 6 2 2 3"/>',
  pale: '<path d="M20 6C40 2 50 10 76 9" stroke="#ddd"/>'
};

const svg = (name) => {
  const [size, art, vw = 16] = ICONS[name];
  return `<svg width="${Math.round(size * vw / 16)}" height="${size}" viewBox="0 0 ${vw} 16">${art}</svg>`;
};

document.body.insertAdjacentHTML('beforeend', `<svg width="0" height="0" style="position:absolute"><defs>
<linearGradient id="gr" x2="1" y2="1"><stop stop-color="#eee"/><stop offset=".8" stop-color="#111"/></linearGradient>
<pattern id="ch" width="4" height="4" patternUnits="userSpaceOnUse"><path d="M0 0h2v2H0zM2 2h2v2H2z" fill="#222"/></pattern></defs></svg>`);

const TAIL = '-redo | fliph flipv rotl rotr reset | -frame bucket fit | -nosel -sela | snapa snapb snapc +snapd grid grid |';
const BARS = {
  full: `spiral +app | open quick | book | sel -half | new dir -save app | -undo ${TAIL} clip -clipg`,
  tail: `${TAIL} clip clipb`
};
document.querySelectorAll('[data-toolbar]').forEach((bar) => {
  bar.innerHTML = BARS[bar.dataset.toolbar].split(' ').map((t) => {
    if (t === '|') return '<hr>';
    if (t === 'clip') return '<button class="clip">CLIPホームページ</button>';
    const cls = t[0] === '-' ? 'off' : t[0] === '+' ? 'on' : t;
    const name = t.replace(/^[-+]/, '');
    return `<button class="${cls}" data-i="${name}" aria-label="${name}"></button>`;
  }).join('');
});

document.querySelectorAll('[data-tools]').forEach((box) => {
  const items = box.dataset.tools.split(' ');
  box.className = `toolset rows-${Math.ceil(items.length / 2)}`;
  box.innerHTML = items.map((t) => {
    const [name, color] = t.replace('*', '').split('@');
    const back = color ? `<rect x="1" y="1" width="14" height="14" fill="#${color}"/>` : '';
    const [size, art] = ICONS[name];
    return `<button class="${t[0] === '*' ? 'sel' : ''}" aria-label="${name}"><svg width="${size}" height="${size}" viewBox="0 0 16 16">${back}${art}</svg></button>`;
  }).join('');
});

document.querySelectorAll('[data-i]').forEach((el) => { el.innerHTML = svg(el.dataset.i); });
document.querySelectorAll('[data-s]').forEach((el) => {
  el.innerHTML = `<svg width="90" height="17" viewBox="0 0 90 17" fill="none" stroke="#333">${STROKES[el.dataset.s]}</svg>`;
});
```
